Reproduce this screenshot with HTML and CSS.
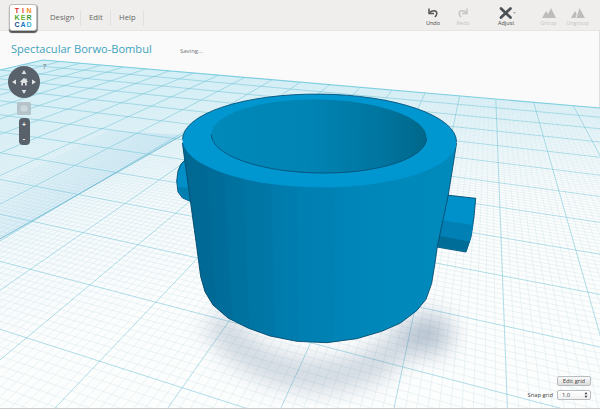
FILE: index.html
```html
<!DOCTYPE html>
<html lang="en">
<head>
<meta charset="utf-8">
<title>Tinkercad</title>
<link rel="stylesheet" href="styles.css">
</head>
<body>
<div class="app">
  <header class="bar">
    <div class="logo"><span class="t1">T</span><span class="t2">I</span><span class="t3">N</span><span class="k1">K</span><span class="k2">E</span><span class="k3">R</span><span class="c1">C</span><span class="c2">A</span><span class="c3">D</span></div>
    <nav class="menu"><span class="design">Design</span><span class="edit">Edit</span><span class="help">Help</span></nav>
    <div class="tools">
      <div class="tool undo"><svg width="12" height="12" viewBox="0 0 12 12"><path d="M2 1.5v5h5" class="line"/><path d="M2.6 5.8C5 3 9.8 3 9.8 6.5c0 1.500-.8 2.600-2 3.500" class="line"/></svg>Undo</div>
      <div class="tool redo off"><svg width="12" height="12" viewBox="0 0 12 12"><path d="M10 1.500v5H5" class="line"/><path d="M9.400 5.800C7 3 2.200 3 2.200 6.500c0 1.500.8 2.600 2 3.500" class="line"/></svg>Redo</div>
      <div class="tool adjust"><svg width="20" height="12" viewBox="0 0 20 12"><path d="M5 1.500l9.500 9" class="thick"/><path d="M14.500 1.500L5 10.500" class="thick"/><path d="M17 5h3l-1.500 2z" class="caret"/></svg>Adjust</div>
      <div class="tool group off"><svg width="14" height="12" viewBox="0 0 14 12"><path d="M0 11L4 4l2 3 3-6 5 10z" class="solid"/></svg>Group</div>
      <div class="tool ungroup off"><svg width="14" height="12" viewBox="0 0 14 12"><path d="M0 11L4 4l1.700 3L4.500 11z M5.500 11L8.500 1l5.500 10z" class="solid"/></svg>Ungroup</div>
    </div>
  </header>
  <main class="stage">
    <svg class="scene" width="600" height="378" viewBox="0 31 600 378">
      <defs>
        <linearGradient id="plane" x1="0" y1="60" x2="95" y2="330" gradientUnits="userSpaceOnUse"><stop offset="0" stop-color="#cdebf3"/><stop offset=".35" stop-color="#e2f3f8"/><stop offset=".65" stop-color="#f5fafc"/><stop offset="1" stop-color="#fcfdfd"/></linearGradient>
        <linearGradient id="haze" x1="0" y1="75" x2="0" y2="190" gradientUnits="userSpaceOnUse"><stop offset="0" stop-color="#d8f1f8"/><stop offset="1" stop-color="#e9f7fb" stop-opacity="0"/></linearGradient>
        <linearGradient id="patch" x1="25" y1="155" x2="68" y2="220" gradientUnits="userSpaceOnUse"><stop offset="0" stop-color="#b5dcef" stop-opacity="0"/><stop offset="1" stop-color="#b5dcef" stop-opacity=".5"/></linearGradient>
        <linearGradient id="fade" x1="0" y1="90" x2="20" y2="250" gradientUnits="userSpaceOnUse"><stop offset="0" stop-color="#fff" stop-opacity=".1"/><stop offset="1" stop-color="#fff"/></linearGradient>
        <mask id="far" maskUnits="userSpaceOnUse" x="0" y="0" width="600" height="409"><rect width="600" height="409" fill="url(#fade)"/></mask>
        <linearGradient id="wall" x1="185" y1="0" x2="455" y2="0" gradientUnits="userSpaceOnUse"><stop offset="0" stop-color="#00759f"/><stop offset=".15" stop-color="#0079a8"/><stop offset=".45" stop-color="#0081b4"/><stop offset=".75" stop-color="#0088bb"/><stop offset="1" stop-color="#0089bb"/></linearGradient>
        <linearGradient id="bore" x1="211" y1="0" x2="427" y2="0" gradientUnits="userSpaceOnUse"><stop offset="0" stop-color="#0089b9"/><stop offset=".45" stop-color="#0084b4"/><stop offset=".8" stop-color="#00749e"/><stop offset="1" stop-color="#006789"/></linearGradient>
        <clipPath id="planeClip"><path d="M43 60L600 108V409H0V70z"/></clipPath>
        <clipPath id="wallClip"><path d="M182.400 143L193 220 196.500 245 200.700 276.700 205 291.700 213 305 228 318 248 328 270 336 296.700 341.300 326.700 342.700 356.700 338.700 381.700 331.300 400 323.300 456 143z"/></clipPath>
        <filter id="soft" x="-30%" y="-50%" width="160%" height="200%"><feGaussianBlur stdDeviation="11"/></filter>
      </defs>
      <g clip-path="url(#planeClip)">
        <rect y="50" width="600" height="359" fill="url(#plane)"/>
        <rect y="50" width="600" height="359" fill="url(#haze)"/>
        <path d="M0 239L183 135 110 130 0 185z" fill="url(#patch)"/>
        <path id="minor" class="minor" mask="url(#far)"/>
        <path id="major" class="major"/>
        <path d="M0 239L216 116" class="seam"/>
      </g>
      <path d="M0 70L43 60 600 108" class="edge"/>
      <path d="M216 318C240 358 275 373 310 375C360 379 390 360 408 332" class="shade" filter="url(#soft)"/>
      <ellipse cx="428" cy="334" rx="24" ry="20" class="spot" filter="url(#soft)"/>
      <path d="M186 159Q180 163 178 171L176.700 181 178 192 182.500 198 192 202z" fill="#008fc6" class="rim"/>
      <path d="M178 187L191 188V201.500L182.500 198z" fill="#007eb0"/>
      <path d="M446 195L475.700 198.300 474 217 471 237 466 252 434 246.500z" fill="#0091ca" class="rim"/>
      <path d="M440 220L473.300 225 470 241.500 436 235z" fill="#0080b4"/>
      <path d="M436 235L469.800 241.500 466 251.700 435 246z" fill="#006d98"/>
      <path d="M182.400 143L193 220 196.500 245 200.700 276.700 205 291.700 213 305 228 318 248 328 270 336 296.700 341.300 326.700 342.700 356.700 338.700 381.700 331.300 400 323.300 416.700 310.700 426 299.300 431.700 283.300 435 263 437.300 246.700 448.300 195 456.600 143z" fill="url(#wall)" class="rim"/>
      <g class="facets" clip-path="url(#wallClip)">
        <path d="M183 140H204L219 345H183z" opacity=".1"/><path d="M183 140H222L234 345H183z" opacity=".1"/><path d="M183 140H241L250 345H183z" opacity=".07"/><path d="M183 140H270L275 345H183z" opacity=".06"/><path d="M183 140H297L299 345H183z" opacity=".04"/><path d="M183 140H335L334 345H183z" opacity=".03"/>
      </g>
      <ellipse cx="319.500" cy="140.700" rx="137" ry="46.600" fill="#0097d1" transform="rotate(.5 319.500 140.700)"/>
      <path d="M182.500 139.500A137 46.600 .5 0 1 456.500 141.900" class="outline"/>
      <ellipse cx="319" cy="136.200" rx="107.700" ry="36.800" fill="url(#bore)" transform="rotate(1 319 136.200)"/>
      <path d="M211.300 134.300A107.700 36.800 1 0 0 426.700 138.100" class="outline"/>
    </svg>
    <div class="heading"><h1>Spectacular Borwo-Bombul</h1><span class="status">Saving...</span></div>
    <div class="nav">
      <svg width="32" height="32" viewBox="0 0 32 32"><circle cx="16" cy="16" r="16" fill="#59616a"/><g fill="#dfe2e4"><path d="M16 4l2.300 4h-4.600zM16 28l2.300-4h-4.600zM4 16l4-2.500v5zM28 16l-4-2.500v5z"/><path d="M16 11.800L11.800 16H13.300V19.500H15V17H17V19.500H18.700V16H20.200L18.800 14.600V12.500H17.700V13.500z"/></g></svg>
      <span class="hint">?</span>
      <svg class="fit" width="14" height="13" viewBox="0 0 14 13"><rect width="14" height="13" rx="1.500" fill="#b4c4ca"/><path d="M3.500 4.500l3.500-1.500 3.500 1.500v4L7 10 3.500 8.500z" fill="#cbd8dc"/></svg>
      <div class="zoom"><span>+</span><span>-</span></div>
    </div>
    <div class="gridctl">
      <div class="btn">Edit grid</div>
      <div class="snap"><span>Snap grid</span><div class="select"><span>1.0</span><svg width="4" height="6" viewBox="0 0 4 6"><path d="M2 0l1.500 2.300h-3zM2 6l1.500-2.300h-3z" fill="#444"/></svg></div></div>
    </div>
  </main>
</div>
<script src="grid.js"></script>
</body>
</html>
```
FILE: styles.css
```css
* { box-sizing: border-box; }
body { margin: 0; font-family: "Open Sans", sans-serif; color: #666; }
.app { width: 600px; height: 409px; overflow: hidden; display: flex; flex-direction: column; background: #fafafa; border-bottom: 1px solid #c9cdce; }
.bar { height: 31px; flex: none; display: flex; background: #efeeec; border-bottom: 1px solid #e6e5e3; position: relative; z-index: 2; }
.logo { margin: 4px 0 0 9px; width: 28px; height: 27px; padding: 2px 4px; display: grid; grid-template: repeat(3, 7px) / repeat(3, 6px); background: #fff; border: 1px solid #bbb; border-radius: 3px; box-shadow: 0 2px 1px #555, 1px 1px 1px #999; font: 700 7px/7px "Liberation Sans", sans-serif; text-align: center; }
.logo span { display: block; height: 7px; overflow: hidden; }
.t1 { color: #d8262c; } .t2 { color: #e8482c; } .t3 { color: #f28c20; }
.k1 { color: #4ba52c; } .k2 { color: #65b32e; } .k3 { color: #3f9b35; }
.c1 { color: #124a86; } .c2 { color: #1678bd; } .c3 { color: #35b0dd; }
.menu { display: flex; font-size: 7.700px; line-height: 14px; margin: 10px 0 0 5px; height: 16px; color: #666; }
.menu span { border-right: 1px solid #e2e1df; padding-left: 8px; }
.design { width: 39px; } .edit { width: 30px; } .help { width: 33px; }
.tools { margin-left: auto; display: flex; margin-top: 7px; padding-right: 8px; }
.tool { display: flex; flex-direction: column; align-items: center; width: 30px; font-size: 5.500px; line-height: 8px; color: #444; white-space: nowrap; }
.redo, .adjust { margin-right: 13px; } .group, .ungroup { width: 29px; }
.tool svg { display: block; }
.line { fill: none; stroke: #555; stroke-width: 1.500; }
.thick { stroke: #4b5155; stroke-width: 2.700; stroke-linecap: round; }
.caret { fill: #aaa; }
.off { color: #c6c5c3; } .off .line { stroke: #c6c5c3; } .solid { fill: #bebdbb; }
.stage { position: relative; flex: 1; min-height: 0; display: flex; flex-direction: column; border-right: 1px solid #dcdfe0; }
.scene { position: absolute; left: 0; top: 0; }
.minor { fill: none; stroke: #5aa0b3; stroke-width: .5; opacity: .22; }
.major { fill: none; stroke: #6bbfd2; stroke-width: .7; opacity: .75; }
.seam { fill: none; stroke: #78bcd5; stroke-width: 1; }
.edge { fill: none; stroke: #7fcfe1; stroke-width: 1.200; }
.shade { fill: none; stroke: #5e7896; stroke-width: 30; opacity: .28; }
.spot { fill: #5e7896; opacity: .42; }
.rim { stroke: #064d72; stroke-width: .9; stroke-linejoin: round; }
.outline { fill: none; stroke: #075078; stroke-width: .9; }
.facets { fill: #00587c; }
.heading, .nav, .gridctl { position: relative; display: flex; }
.heading { align-items: baseline; margin: 9px 0 0 11px; height: 18px; }
h1 { margin: 0; width: 169px; font-size: 11.100px; line-height: 17px; font-weight: 400; color: #3fa3bc; white-space: nowrap; }
.status { font-size: 6px; color: #777; }
.nav { margin: 8px 0 0 8px; width: 32px; flex-direction: column; align-items: center; }
.hint { position: absolute; left: 35px; top: -3px; font-size: 7px; line-height: 8px; }
.fit { margin-top: 4px; }
.zoom { margin-top: 3px; width: 11px; height: 27px; border-radius: 4px; background: #59616a; color: #fff; display: grid; grid-template-rows: 1fr 1fr; text-align: center; font: 700 7px/13px "Open Sans", sans-serif; }
.gridctl { margin: auto 8px 8px auto; flex-direction: column; align-items: flex-end; gap: 4px; font-size: 5.800px; color: #444; }
.btn, .select { width: 34px; height: 10px; border: 1px solid #b9bdbf; border-radius: 2px; line-height: 8px; }
.btn { background: linear-gradient(#fafafa, #dcdcdc); text-align: center; }
.snap { display: flex; align-items: center; gap: 4px; }
.select { background: linear-gradient(#fff, #f0f0f0); display: flex; justify-content: space-between; align-items: center; padding: 0 2px 0 4px; }
```
FILE: grid.js
```js
// Anchor points of the work plane: [column, row, screen x, screen y].
const anchors = [
  [0,2,31.7,221],[0,3,79,194],[0,4,115.7,172.3],[0,5,146.7,153.7],[0,6,172.7,140],
  [1,1,30,270.7],[1,2,83.3,232.7],[1,3,126,202.7],[1,4,159,179],
  [2,0,26.7,338.3],[2,1,90,284],[2,2,137.3,244],[2,3,176,213.3],
  [3,0,99,361],[3,1,156.7,301.7],[4,0,182,387.7],[4,1,230,320.7],[5,1,311,343.3],
  [6,1,402.7,366.7],[6,2,415,308.3],[7,1,506.7,395],[7,2,504.3,325.7],[7,3,503.3,275.7],
  [7,4,501.3,237.7],[7,5,500,207.7],[7,6,499,183.3],[7,7,498,162.7],[7,8,497.3,145.7],
  [8,3,589,292.3],[8,4,575.7,250],[8,5,566,216],[8,6,558.3,191.7],[8,7,551.7,168.3],
  [8,8,546.7,151.7],[8,9,543.3,135.7],[8,10,540,122.3],[8,11,537.3,111.7]
];
// Least-squares homography from plane coordinates to the screen.
const M = Array.from({length: 8}, () => new Array(9).fill(0));
function addRow(r, b) {
  for (let i = 0; i < 8; i++) {
    for (let j = 0; j < 8; j++) M[i][j] += r[i] * r[j];
    M[i][8] += r[i] * b;
  }
}
for (const [u, v, x, y] of anchors) {
  addRow([u, v, 1, 0, 0, 0, -u * x, -v * x], x);
  addRow([0, 0, 0, u, v, 1, -u * y, -v * y], y);
}
for (let i = 0; i < 8; i++) {
  let p = i;
  for (let r = i + 1; r < 8; r++) if (Math.abs(M[r][i]) > Math.abs(M[p][i])) p = r;
  [M[i], M[p]] = [M[p], M[i]];
  for (let r = 0; r < 8; r++) if (r !== i) {
    const f = M[r][i] / M[i][i];
    for (let c = i; c < 9; c++) M[r][c] -= f * M[i][c];
  }
}
const h = M.map((r, i) => r[8] / r[i]);
const depth = (u, v) => h[6] * u + h[7] * v + 1;
function line(a, b) {
  const near = 0.12;
  let wa = depth(...a), wb = depth(...b);
  if (wa < near && wb < near) return "";
  const cut = (p, q, wp, wq) => {
    const t = (near - wp) / (wq - wp);
    return [p[0] + (q[0] - p[0]) * t, p[1] + (q[1] - p[1]) * t];
  };
  if (wa < near) a = cut(a, b, wa, wb);
  else if (wb < near) b = cut(b, a, wb, wa);
  const pt = ([u, v]) => {
    const w = depth(u, v);
    return ((h[0]*u + h[1]*v + h[2]) / w).toFixed(1) + " " + ((h[3]*u + h[4]*v + h[5]) / w).toFixed(1);
  };
  return "M" + pt(a) + "L" + pt(b);
}
let minor = "", major = "";
for (let i = -100; i <= 130; i++) {
  const d = line([i / 10, -3], [i / 10, 12]);
  if (i % 10 === 0) major += d; else minor += d;
}
for (let i = -30; i <= 120; i++) {
  const d = line([-10, i / 10], [13, i / 10]);
  if (i % 10 === 0) major += d; else minor += d;
}
document.getElementById("minor").setAttribute("d", minor);
document.getElementById("major").setAttribute("d", major);
```
